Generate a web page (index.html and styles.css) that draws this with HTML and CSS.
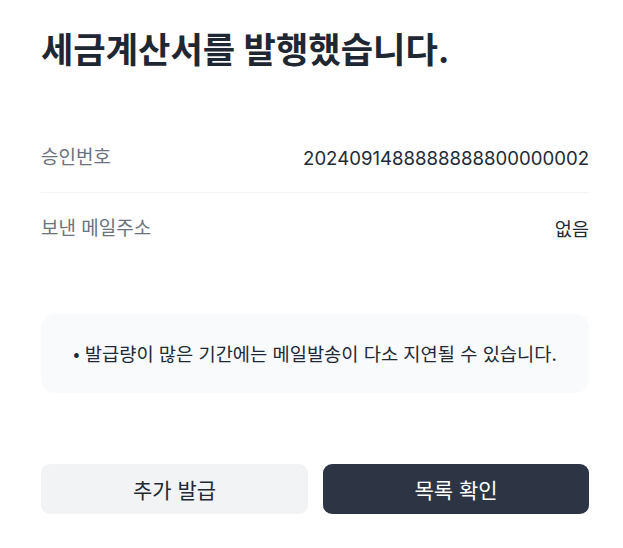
FILE: index.html
```html
<!DOCTYPE html>
<html lang="ko">
<head>
<meta charset="utf-8">
<link rel="stylesheet" href="styles.css">
</head>
<body>
<main class="page">
  <h1 class="title">세금계산서를 발행했습니다.</h1>
  <section class="details">
    <div class="row">
      <span class="label">승인번호</span>
      <span class="value">2024091488888888800000002</span>
    </div>
    <div class="row">
      <span class="label">보낸 메일주소</span>
      <span class="value">없음</span>
    </div>
  </section>
  <div class="notice">
    <p><span class="bullet">•</span> 발급량이 많은 기간에는 메일발송이 다소 지연될 수 있습니다.</p>
  </div>
  <div class="actions">
    <button class="btn btn-light">추가 발급</button>
    <button class="btn btn-dark">목록 확인</button>
  </div>
</main>
</body>
</html>
```
FILE: styles.css
```css
* { box-sizing: border-box; }
html, body { margin: 0; padding: 0; background: #ffffff; }
body {
  font-family: Inter, "Noto Sans CJK KR", sans-serif;
  color: #1f2937;
}
.page {
  width: 548px;
  margin-left: 41px;
  padding-top: 28px;
}
.title {
  margin: 0;
  font-size: 35.2px;
  line-height: 44px;
  font-weight: 700;
  color: #1f2733;
}
.details {
  margin-top: 50px;
}
.row {
  display: flex;
  justify-content: space-between;
  align-items: center;
  padding: 24px 0 22px;
  line-height: 24px;
  font-size: 19px;
}
.row + .row { border-top: 1px solid #f3f4f6; }
.label { color: #6b7280; }
.value { color: #1f2937; font-size: 18.6px; }
.notice {
  margin-top: 51px;
  height: 79px;
  background: #f9fafb;
  border-radius: 14px;
  display: flex;
  align-items: center;
  justify-content: center;
  padding-top: 1px;
}
.notice p {
  margin: 0;
  font-size: 18.7px;
  line-height: 24px;
  color: #1f2937;
}
.bullet { font-family: "Noto Sans CJK KR", sans-serif; }
.actions {
  margin-top: 71px;
  display: flex;
  gap: 15px;
}
.btn {
  height: 50px;
  border: none;
  border-radius: 9px;
  font-family: inherit;
  font-size: 21px;
  font-weight: 400;
}
.btn-light { background: #f2f3f4; color: #1f2937; flex: 0 0 267px; }
.btn-dark { background: #2d3544; color: #ffffff; flex: 1; }
```
